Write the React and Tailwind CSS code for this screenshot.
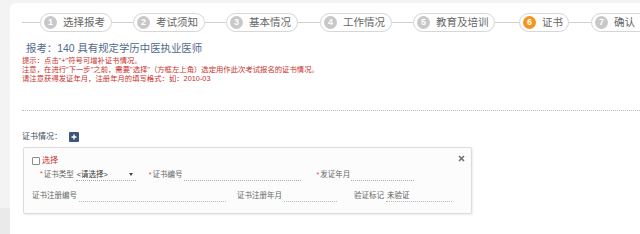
import React from "react";

const steps = [
  { n: 1, t: "选择报考", w: "w-[72px]", line: "w-[18px]" },
  { n: 2, t: "考试须知", w: "w-[72px]", line: "w-[21px]" },
  { n: 3, t: "基本情况", w: "w-[72px]", line: "w-[21px]" },
  { n: 4, t: "工作情况", w: "w-[72px]", line: "w-[22px]" },
  { n: 5, t: "教育及培训", w: "w-[82px]", line: "w-[21px]" },
  { n: 6, t: "证书", w: "w-[50px]", line: "w-[24px]", active: true },
  { n: 7, t: "确认", w: "w-[70px]", line: "w-[22px]" },
];

function Star() {
  return <span className="text-[#e8404a] text-[7px] leading-none mr-[1px] self-start mt-[1px]">*</span>;
}

export default function App() {
  return (
    <div className="w-[640px] h-[234px] overflow-hidden bg-[#f3f3f3] flex flex-col font-['Liberation_Sans','Noto_Sans_CJK_SC',sans-serif]">
      <div className="h-[3px] shrink-0" />
      <div className="flex flex-1">
        <div className="w-[10px] shrink-0 flex flex-col">
          <div className="flex-1" />
          <div className="h-[26px] bg-[#eaeaea]" />
        </div>
        <div className="flex-1 bg-white rounded-tl-[6px] pt-[10px] min-w-0">
          {/* steps */}
          <div className="flex items-center ml-[12px] whitespace-nowrap">
            {steps.map((s) => (
              <React.Fragment key={s.n}>
                <div className={`${s.line} h-px bg-[#cfcfcf] shrink-0`} />
                <div className={`${s.w} shrink-0 h-[19px] rounded-full border border-[#d6d6d6] bg-white flex items-center pl-[3px] gap-[6px]`}>
                  <span
                    className={`w-[13px] h-[13px] rounded-full ${s.active ? "bg-[#f7941d]" : "bg-[#c8c8c8]"} text-white text-[9px] font-bold leading-none flex items-center justify-center`}
                  >
                    {s.n}
                  </span>
                  <span className="text-[10.5px] text-[#666] leading-none">{s.t}</span>
                </div>
              </React.Fragment>
            ))}
          </div>

          {/* title */}
          <div className="mt-[10px] ml-[16px] text-[10.4px] leading-[14px] text-[#52698a] whitespace-nowrap">
            报考：140 具有规定学历中医执业医师
          </div>
          <div className="ml-[12px] text-[7.35px] leading-[9px] text-[#c9302c] whitespace-nowrap">
            <div>提示：点击"+"符号可增补证书情况。</div>
            <div>注意，在进行"下一步"之前，需要"选择"（方框左上角）选定用作此次考试报名的证书情况。</div>
            <div>请注意获得发证年月，注册年月的填写格式：如：2010-03</div>
          </div>

          <div className="mt-[27px] ml-[12px] border-t border-dotted border-[#bdbdbd]" />

          <div className="mt-[21px] ml-[12px] flex items-center h-[10px]">
            <span className="text-[8px] leading-none text-[#3d4a5a]">证书情况：</span>
            <span className="ml-[7px] w-[10px] h-[10px] bg-[#3c5878] flex items-center justify-center rounded-[1px]">
              <svg width="6" height="6" viewBox="0 0 6 6">
                <path d="M3 0.5V5.5M0.5 3H5.5" stroke="white" strokeWidth="1.4" />
              </svg>
            </span>
          </div>

          {/* card */}
          <div className="relative mt-[5px] ml-[13px] w-[449px] h-[67px] border border-[#dcdcdc] rounded-[2px] bg-[#fcfcfc] shadow-[1px_1px_2px_rgba(0,0,0,0.08)] pt-[9px] pl-[8px] text-[7.5px] leading-none whitespace-nowrap">
            <svg className="absolute right-[6px] top-[7px]" width="7" height="7" viewBox="0 0 7 7">
              <path d="M1 1L6 6M6 1L1 6" stroke="#6f6f6f" strokeWidth="1.6" />
            </svg>
            <div className="flex items-center h-[8px]">
              <span className="w-[8px] h-[8px] border border-[#8a8a8a] bg-white rounded-[1px]" />
              <span className="ml-[2px] text-[#c9302c] text-[8px]">选择</span>
            </div>

            <div className="mt-[4px] ml-[8px] flex items-center h-[12px] text-[#666]">
              <Star />
              <span>证书类型</span>
              <div className="ml-[2px] w-[60px] h-[12px] border-b border-dotted border-[#aaa] flex items-center pl-[1px] relative">
                <span className="text-[#333]">&lt;请选择&gt;</span>
                <span className="absolute right-[3px] top-[4px] w-0 h-0 border-l-[2.5px] border-r-[2.5px] border-t-[3px] border-l-transparent border-r-transparent border-t-[#444]" />
              </div>
              <span className="ml-[13px]"><Star /></span>
              <span>证书编号</span>
              <div className="ml-[2px] w-[117px] h-[12px] border-b border-dotted border-[#aaa]" />
              <span className="ml-[15px]"><Star /></span>
              <span>发证年月</span>
              <div className="ml-[1px] w-[63px] h-[12px] border-b border-dotted border-[#aaa]" />
            </div>

            <div className="mt-[9px] flex items-center h-[12px] text-[#666]">
              <span>证书注册编号</span>
              <div className="ml-[2px] w-[147px] h-[12px] border-b border-dotted border-[#bbb]" />
              <span className="ml-[11px]">证书注册年月</span>
              <div className="ml-[2px] w-[53px] h-[12px] border-b border-dotted border-[#bbb]" />
              <span className="ml-[17px]">验证标记</span>
              <div className="ml-[2px] w-[66px] h-[12px] border-b border-dotted border-[#bbb] flex items-center pl-[1px] text-[#555]">
                未验证
              </div>
            </div>
          </div>
        </div>
      </div>
    </div>
  );
}
